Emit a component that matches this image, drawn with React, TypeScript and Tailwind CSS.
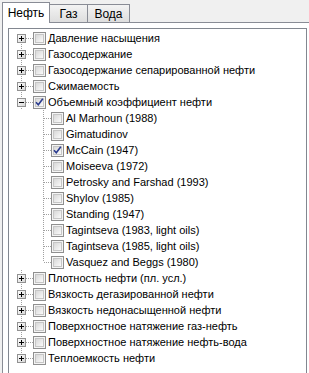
import { Fragment } from 'react'

type Node = { label: string; checked?: boolean; children?: Node[] }

const tree: Node[] = [
  { label: 'Давление насыщения' },
  { label: 'Газосодержание' },
  { label: 'Газосодержание сепарированной нефти' },
  { label: 'Сжимаемость' },
  {
    label: 'Объемный коэффициент нефти',
    checked: true,
    children: [
      { label: 'Al Marhoun (1988)' },
      { label: 'Gimatudinov' },
      { label: 'McCain (1947)', checked: true },
      { label: 'Moiseeva (1972)' },
      { label: 'Petrosky and Farshad (1993)' },
      { label: 'Shylov (1985)' },
      { label: 'Standing (1947)' },
      { label: 'Tagintseva (1983, light oils)' },
      { label: 'Tagintseva (1985, light oils)' },
      { label: 'Vasquez and Beggs (1980)' },
    ],
  },
  { label: 'Плотность нефти (пл. усл.)' },
  { label: 'Вязкость дегазированной нефти' },
  { label: 'Вязкость недонасыщенной нефти' },
  { label: 'Поверхностное натяжение газ-нефть' },
  { label: 'Поверхностное натяжение нефть-вода' },
  { label: 'Теплоемкость нефти' },
]

const DOT = '#a0a0a0'

function CheckBox({ checked }: { checked?: boolean }) {
  return (
    <span className="flex h-[13px] w-[13px] shrink-0 items-center justify-center border border-[#8f8f8f] bg-[#f4f4f4]">
      <span className="flex h-[9px] w-[9px] items-center justify-center border border-[#c6c6c6] bg-gradient-to-br from-[#d8d8d8] to-[#fafafa]">
        {checked && (
          <svg width="9" height="9" viewBox="0 0 9 9" className="overflow-visible">
            <path d="M1 4.2 L3.3 6.8 L7.8 0.8" fill="none" stroke="#2a3b8f" strokeWidth="1.6" />
          </svg>
        )}
      </span>
    </span>
  )
}

// connector for root rows: 24px cell, line at x=12
function RootLines({ first, last, expanded }: { first: boolean; last: boolean; expanded?: boolean }) {
  return (
    <svg width="24" height="16" className="shrink-0" shapeRendering="crispEdges">
      <line x1="12.5" y1={first ? 8 : 0} x2="12.5" y2={last ? 8 : 16} stroke={DOT} strokeDasharray="1 1" />
      <line x1="17" y1="8.5" x2="24" y2="8.5" stroke={DOT} strokeDasharray="1 1" />
      <rect x="8.5" y="4.5" width="8" height="8" fill="url(#btn)" stroke="#919191" />
      <line x1="10" y1="8.5" x2="15" y2="8.5" stroke="#000" />
      {!expanded && <line x1="12.5" y1="6" x2="12.5" y2="11" stroke="#000" />}
    </svg>
  )
}

function ChildLines({ last }: { last: boolean }) {
  return (
    <svg width="42" height="16" className="shrink-0" shapeRendering="crispEdges">
      <line x1="34.5" y1="0" x2="34.5" y2={last ? 8 : 16} stroke={DOT} strokeDasharray="1 1" />
      <line x1="35" y1="8.5" x2="42" y2="8.5" stroke={DOT} strokeDasharray="1 1" />
    </svg>
  )
}

export default function App() {
  return (
    <div className="h-[373px] w-[309px] overflow-hidden bg-[#f0f0f0] font-['Tahoma','Liberation_Sans',sans-serif] text-[11px] text-black">
      <svg width="0" height="0" className="absolute">
        <defs>
          <linearGradient id="btn" x1="0" y1="0" x2="1" y2="1">
            <stop offset="0" stopColor="#ffffff" />
            <stop offset="1" stopColor="#d4d4d4" />
          </linearGradient>
        </defs>
      </svg>

      {/* Tabs */}
      <div className="flex h-[22px] items-end pl-[2px] pt-[2px]">
        <div className="relative z-10 -mb-px flex h-[21px] w-[48px] items-center justify-center border border-b-0 border-[#898c95] bg-white text-[12px]">
          Нефть
        </div>
        <div className="flex h-[18px] w-[38px] items-center justify-center border border-l-0 border-b-0 border-[#898c95] bg-gradient-to-b from-[#f3f3f3] to-[#dedede] text-[12px]">
          Газ
        </div>
        <div className="flex h-[18px] w-[42px] items-center justify-center border border-l-0 border-b-0 border-[#898c95] bg-gradient-to-b from-[#f3f3f3] to-[#dedede] text-[12px]">
          Вода
        </div>
      </div>

      {/* Tab page */}
      <div className="ml-[2px] h-[400px] w-[320px] border border-[#898c95] bg-white pl-[5px] pt-[5px]">
        <div className="h-[400px] w-[299px] border border-[#828790] bg-white pt-px font-['Liberation_Sans',sans-serif] text-[11px]">
          {tree.map((n, i) => (
            <Fragment key={n.label}>
              <div className="flex h-4 items-center">
                <RootLines first={i === 0} last={i === tree.length - 1} expanded={!!n.children} />
                <CheckBox checked={n.checked} />
                <span className="ml-px whitespace-nowrap px-px">{n.label}</span>
              </div>
              {n.children?.map((c, j) => (
                <div key={c.label} className="flex h-4 items-center">
                  <ChildLines last={j === n.children!.length - 1} />
                  <CheckBox checked={c.checked} />
                  <span className="ml-px whitespace-nowrap px-px">{c.label}</span>
                </div>
              ))}
            </Fragment>
          ))}
        </div>
      </div>
    </div>
  )
}
